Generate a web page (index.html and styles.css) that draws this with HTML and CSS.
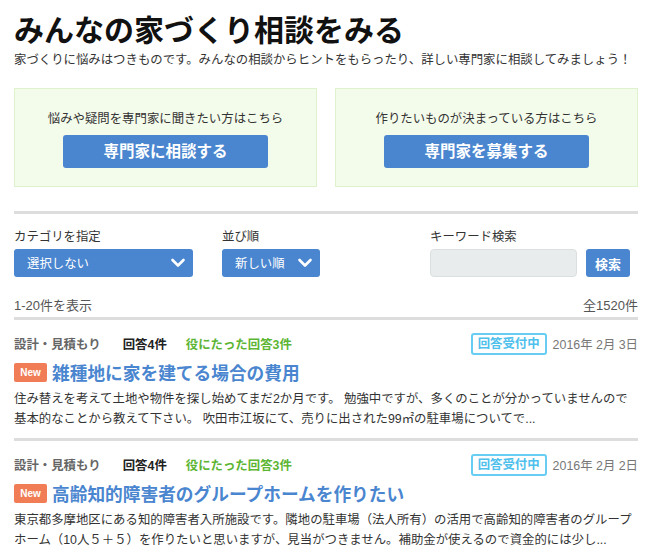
FILE: index.html
```html
<!DOCTYPE html>
<html lang="ja">
<head>
    <meta charset="UTF-8">
    <meta name="viewport" content="width=device-width, initial-scale=1.0">
    <title>みんなの家づくり相談をみる</title>
    <link rel="stylesheet" href="styles.css">
</head>
<body>
<div class="container">
    <h1>みんなの家づくり相談をみる</h1>
    <p class="lead">家づくりに悩みはつきものです。みんなの相談からヒントをもらったり、詳しい専門家に相談してみましょう！</p>

    <div class="cta-row">
        <div class="cta-box">
            <p>悩みや疑問を専門家に聞きたい方はこちら</p>
            <a href="#" class="cta-btn">専門家に相談する</a>
        </div>
        <div class="cta-box">
            <p>作りたいものが決まっている方はこちら</p>
            <a href="#" class="cta-btn">専門家を募集する</a>
        </div>
    </div>

    <form class="filters">
        <div class="filter filter-category">
            <label>カテゴリを指定</label>
            <div class="select">
                <span>選択しない</span>
                <svg width="16" height="16" viewBox="0 0 16 16"><polyline points="2.5,5 8,10.5 13.5,5" fill="none" stroke="#fff" stroke-width="2.6" stroke-linecap="round" stroke-linejoin="round"/></svg>
            </div>
        </div>
        <div class="filter filter-order">
            <label>並び順</label>
            <div class="select">
                <span>新しい順</span>
                <svg width="16" height="16" viewBox="0 0 16 16"><polyline points="2.5,5 8,10.5 13.5,5" fill="none" stroke="#fff" stroke-width="2.6" stroke-linecap="round" stroke-linejoin="round"/></svg>
            </div>
        </div>
        <div class="filter filter-keyword">
            <label>キーワード検索</label>
            <div class="search">
                <input type="text">
                <button type="button">検索</button>
            </div>
        </div>
    </form>

    <div class="count">
        <span>1-20件を表示</span>
        <span>全1520件</span>
    </div>

    <div class="question">
        <div class="meta">
            <span class="category">設計・見積もり</span>
            <span class="answers">回答4件</span>
            <span class="useful">役にたった回答3件</span>
            <span class="status">回答受付中</span>
            <span class="date">2016年 2月 3日</span>
        </div>
        <h2><span class="new">New</span><a href="#">雑種地に家を建てる場合の費用</a></h2>
        <p class="excerpt">住み替えを考えて土地や物件を探し始めてまだ2か月です。 勉強中ですが、多くのことが分かっていませんので基本的なことから教えて下さい。 吹田市江坂にて、売りに出された99㎡の駐車場についてで...</p>
    </div>

    <div class="question">
        <div class="meta">
            <span class="category">設計・見積もり</span>
            <span class="answers">回答4件</span>
            <span class="useful">役にたった回答3件</span>
            <span class="status">回答受付中</span>
            <span class="date">2016年 2月 2日</span>
        </div>
        <h2><span class="new">New</span><a href="#">高齢知的障害者のグループホームを作りたい</a></h2>
        <p class="excerpt">東京都多摩地区にある知的障害者入所施設です。隣地の駐車場（法人所有）の活用で高齢知的障害者のグループホーム（10人５＋５）を作りたいと思いますが、見当がつきません。補助金が使えるので資金的には少し...</p>
    </div>
</div>
</body>
</html>
```

FILE: styles.css
```css
body {
    font-family: "Liberation Sans", "Noto Sans CJK JP", sans-serif;
    background-color: #fff;
    color: #333;
    margin: 0;
    padding: 0;
}

.container {
    width: 624px;
    padding: 0 14px;
}

h1 {
    font-size: 30px;
    line-height: 36px;
    margin: 13px 0 0;
    color: #111;
}

.lead {
    font-size: 12.4px;
    line-height: 18px;
    margin: 2px 0 0;
}

.cta-row {
    display: flex;
    gap: 18px;
    margin-top: 19px;
}

.cta-box {
    flex: 1;
    height: 97px;
    border: 1px solid #def3cd;
    background-color: #f3fbeb;
    text-align: center;
}

.cta-box p {
    font-size: 12.4px;
    line-height: 18px;
    margin: 21px 0 0;
}

.cta-btn {
    display: inline-block;
    width: 205px;
    height: 33px;
    line-height: 33px;
    margin-top: 7px;
    background-color: #4a86cf;
    border-radius: 3px;
    color: #fff;
    font-size: 15.5px;
    font-weight: bold;
    text-decoration: none;
}

.filters {
    display: flex;
    margin-top: 24px;
    padding-top: 15px;
    border-top: 3px solid #ddd;
}

.filter label {
    display: block;
    font-size: 12.4px;
    line-height: 16px;
    margin-bottom: 4px;
}

.filter-category {
    width: 179px;
}

.filter-order {
    width: 98px;
    margin-left: 29px;
}

.filter-keyword {
    margin-left: 110px;
}

.select {
    display: flex;
    align-items: center;
    justify-content: space-between;
    height: 28px;
    padding: 0 7px 0 13px;
    background-color: #4a86cf;
    border-radius: 3px;
    color: #fff;
    font-size: 12.4px;
}

.search {
    display: flex;
    gap: 9px;
}

.search input {
    width: 147px;
    height: 28px;
    box-sizing: border-box;
    border: 1px solid #dcdfe0;
    border-radius: 4px;
    background-color: #e9eced;
}

.search button {
    width: 44px;
    height: 28px;
    padding: 0;
    border: none;
    border-radius: 3px;
    background-color: #4a86cf;
    color: #fff;
    font-family: inherit;
    font-size: 13px;
    font-weight: bold;
}

.count {
    display: flex;
    justify-content: space-between;
    margin-top: 19px;
    font-size: 13px;
    line-height: 20px;
    color: #555;
    border-bottom: 3px solid #ddd;
    padding-bottom: 1px;
}

.question {
    padding: 13px 0 9px;
    border-bottom: 3px solid #ddd;
}

.meta {
    display: flex;
    align-items: center;
    height: 22px;
    font-size: 12.4px;
    font-weight: bold;
}

.category {
    color: #666;
    margin-right: 22px;
}

.answers {
    color: #222;
    margin-right: 19px;
}

.useful {
    color: #5db534;
}

.status {
    margin-left: auto;
    height: 22px;
    box-sizing: border-box;
    line-height: 18px;
    padding: 0 5px;
    border: 2px solid #67cdf3;
    border-radius: 3px;
    color: #4ec0ec;
}

.date {
    margin-left: 6px;
    font-weight: normal;
    color: #777;
}

.question h2 {
    display: flex;
    align-items: center;
    height: 24px;
    margin: 5px 0 0;
    font-size: 17.7px;
}

.question h2 a {
    color: #4a86cf;
    text-decoration: none;
}

.new {
    width: 33px;
    height: 19px;
    line-height: 19px;
    margin-right: 5px;
    background-color: #f07d56;
    border-radius: 2px;
    color: #fff;
    font-size: 10px;
    text-align: center;
}

.excerpt {
    margin: 5px 0 0;
    font-size: 12.4px;
    line-height: 20px;
}
```
